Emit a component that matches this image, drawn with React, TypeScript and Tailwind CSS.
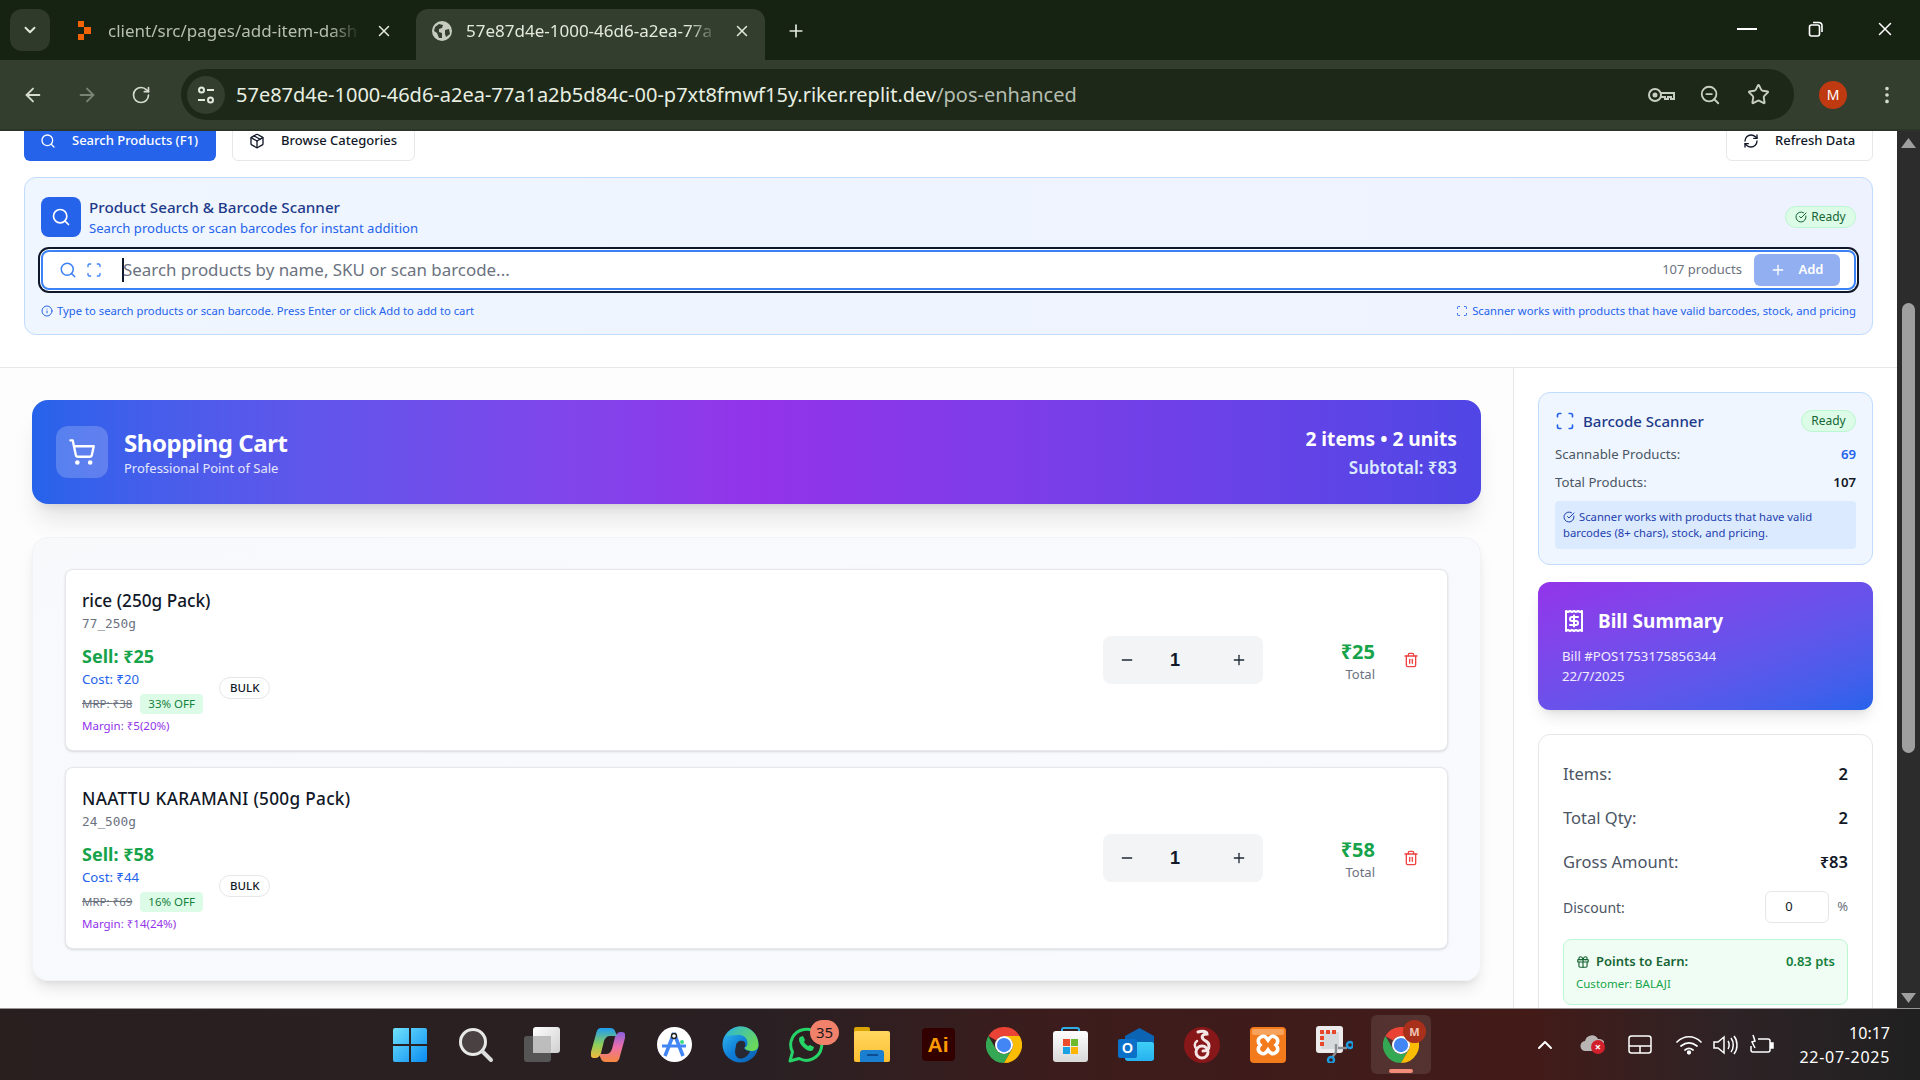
import React from "react";
import { ArrowLeft, ArrowRight, RotateCw, ZoomOut, Star, EllipsisVertical, ChevronDown, X, Plus, Minus, Search, Package, RefreshCw, Scan, CircleCheckBig, Info, ShoppingCart, Trash2, Receipt, Gift, ChevronUp } from "lucide-react";

function ChromeLogo({ size = 36 }: { size?: number }) {
  return (
    <svg width={size} height={size} viewBox="0 0 48 48">
      <path fill="#ea4335" d="M3.2 12A24 24 0 0 1 44.8 12L24 12A12 12 0 0 0 13.6 18Z" />
      <path fill="#34a853" d="M3.2 12A24 24 0 0 0 24 48L34.4 30A12 12 0 0 1 13.6 30Z" />
      <path fill="#fbbc04" d="M44.8 12A24 24 0 0 1 24 48L34.4 30A12 12 0 0 0 34.4 18L24 12Z" />
      <circle cx="24" cy="24" r="12" fill="#fff" />
      <circle cx="24" cy="24" r="9.5" fill="#4285f4" />
    </svg>
  );
}

function TaskIcon({ children, className = "" }: { children: React.ReactNode; className?: string }) {
  return <div className={`relative w-[66px] h-[59px] shrink-0 flex items-center justify-center ${className}`}>{children}</div>;
}

function Item({ name, nameClass = "", sku, sell, cost, mrp, off, margin, total }: { name: string; nameClass?: string; sku: string; sell: string; cost: string; mrp: string; off: string; margin: string; total: string }) {
  return (
    <div className="h-[182px] rounded-lg border border-[#e5e7eb] bg-white shadow-sm pl-[16px] pr-[28px] flex items-center justify-between">
      <div className="mt-[2px]">
        <div className={`h-[26px] leading-[28px] text-[17.2px] font-medium text-[#111827] ${nameClass}`}>{name}</div>
        <div className="mt-[2px] h-[18px] leading-[18px] text-[12.8px] text-[#6b7280] font-['DejaVu_Sans_Mono',monospace]">{sku}</div>
        <div className="mt-[10px] flex items-center gap-[15px]">
          <div className="w-[122px]">
            <div className="h-[26px] leading-[26px] text-[18px] font-bold text-[#16a34a]">Sell: {sell}</div>
            <div className="h-[20px] leading-[20px] text-[13.2px] text-[#2563eb]">Cost: {cost}</div>
            <div className="mt-[4px] flex items-center h-[22px]">
              <span className="text-[11.5px] text-[#6b7280] line-through">MRP: {mrp}</span>
              <span className="ml-[8px] h-[20px] px-[8px] rounded bg-[#dcfce7] text-[#15803d] text-[11.5px] leading-[20px] whitespace-nowrap">{off}</span>
            </div>
            <div className="mt-[2px] h-[18px] leading-[18px] text-[11.5px] text-[#9333ea]">{margin}</div>
          </div>
          <span className="-mt-[2px] h-[22px] px-[10px] rounded-full border border-[#e5e7eb] text-[11.5px] font-medium leading-[20px] text-[#111827]">BULK</span>
        </div>
      </div>
      <div className="flex items-center">
        <div className="w-[160px] h-[48px] rounded-lg bg-[#f3f4f6] flex items-center text-[#1f2937]">
          <div className="w-[48px] flex justify-center"><Minus size={16} /></div>
          <div className="w-[48px] text-center text-[18px] font-semibold text-[#111827] font-['Liberation_Sans',sans-serif]">1</div>
          <div className="ml-[16px] w-[48px] flex justify-center"><Plus size={16} /></div>
        </div>
        <div className="w-[112px] text-right">
          <div className="mt-[1px] h-[26px] leading-[28px] text-[20px] font-bold text-[#16a34a]">{total}</div>
          <div className="h-[20px] leading-[20px] text-[13px] text-[#6b7280]">Total</div>
        </div>
        <div className="ml-[28px]"><Trash2 size={16} className="text-[#ef4444]" /></div>
      </div>
    </div>
  );
}

export default function App() {
  return (
    <div className="h-screen w-full flex flex-col overflow-hidden font-['Noto_Sans',sans-serif]">
      {/* tab strip */}
      <div className="h-[60px] shrink-0 bg-[#172312] flex items-end relative">
        <div className="absolute left-[10px] top-[9px] w-[40px] h-[42px] rounded-xl bg-[#2f3a2a] flex items-center justify-center text-[#e3e9dd]"><ChevronDown size={18} strokeWidth={2.5} /></div>
        <div className="ml-[78px] mb-[19px] w-[330px] flex items-center h-[20px]">
          <svg width="14" height="22" viewBox="0 0 14 22" className="shrink-0"><rect x="0" y="1" width="6" height="6" fill="#f26207" /><rect x="6" y="7" width="7" height="7" fill="#f26207" /><rect x="0" y="14" width="6" height="6" fill="#f26207" /></svg>
          <span className="ml-[16px] w-[252px] shrink-0 overflow-hidden whitespace-nowrap text-[17px] text-[#b7bfb0] [mask-image:linear-gradient(90deg,#000_88%,transparent)]">client/src/pages/add-item-dash</span>
          <X size={18} className="ml-[15px] shrink-0 text-[#e3e9dd]" />
        </div>
        <div className="ml-[8px] w-[349px] h-[51px] rounded-t-xl bg-[#333e2f] flex items-center pl-[16px] pb-[7px]">
          <svg width="20" height="20" viewBox="0 0 20 20" className="shrink-0"><circle cx="10" cy="10" r="10" fill="#c6cdc0" /><path d="M3 6l4-3 4 1-1 3-3 1 0 3 3 1 0 5-3 0-2-5-3-2z M13 9l4-1 1 5-4 3-1-3z" fill="#333e2f" /></svg>
          <span className="ml-[14px] w-[252px] shrink-0 overflow-hidden whitespace-nowrap text-[17px] text-[#e3e9dd] [mask-image:linear-gradient(90deg,#000_88%,transparent)]">57e87d4e-1000-46d6-a2ea-77a</span>
          <X size={18} className="ml-[15px] shrink-0 text-[#e3e9dd]" />
        </div>
        <div className="ml-[21px] mb-[19px] text-[#e3e9dd]"><Plus size={20} /></div>
        <div className="absolute left-[1737px] top-[28px] w-[20px] h-[2px] bg-white" />
        <svg className="absolute left-[1808px] top-[21px]" width="16" height="16" viewBox="0 0 16 16" fill="none" stroke="#fff" strokeWidth="1.6"><rect x="1.5" y="4" width="10" height="11" rx="2" /><path d="M5 1.5h6a3 3 0 0 1 3 3V11" /></svg>
        <X size={22} strokeWidth={1.6} className="absolute left-[1874px] top-[18px] text-white" />
      </div>
      {/* toolbar */}
      <div className="h-[71px] shrink-0 bg-[#333e2f] border-b-2 border-[#2c3628] flex items-center">
        <ArrowLeft size={22} className="ml-[22px] text-[#d5dccf]" />
        <ArrowRight size={22} className="ml-[32px] text-[#7b8475]" />
        <RotateCw size={20} className="ml-[33px] text-[#d5dccf]" />
        <div className="ml-[30px] w-[1613px] h-[51px] rounded-full bg-[#1d2818] flex items-center pl-[6px]">
          <div className="w-[38px] h-[38px] rounded-full bg-[#333e2f] flex items-center justify-center">
            <svg width="20" height="20" viewBox="0 0 20 20" fill="none" stroke="#e3e9dd" strokeWidth="2"><circle cx="5.5" cy="5" r="2.5" /><path d="M11 5h7M2 15h7" /><circle cx="14.5" cy="15" r="2.5" /></svg>
          </div>
          <span className="ml-[11px] text-[20px] text-[#e8efe2] whitespace-nowrap">57e87d4e-1000-46d6-a2ea-77a1a2b5d84c-00-p7xt8fmwf15y.riker.replit.dev<span className="text-[#b5bdb0]">/pos-enhanced</span></span>
          <div className="ml-auto flex items-center text-[#c8cfc2] pr-[24px]">
            <svg width="28" height="20" viewBox="0 0 28 20" fill="none" stroke="#c8cfc2" strokeWidth="2"><circle cx="7" cy="10" r="6" /><circle cx="7" cy="10" r="1.5" fill="#c8cfc2" /><path d="M13 8h13v6h-3v-2h-3v2h-3v-2h-4" /></svg>
            <ZoomOut size={22} className="ml-[23px]" />
            <Star size={23} className="ml-[26px]" />
          </div>
        </div>
        <div className="ml-[25px] w-[28px] h-[28px] rounded-full bg-[#bf3a10] flex items-center justify-center text-white text-[14px]">M</div>
        <EllipsisVertical size={22} className="ml-[29px] text-[#d5dccf]" />
      </div>
      {/* browser content */}
      <div className="flex-1 min-h-0 flex">
        <div className="w-[1897px] shrink-0 bg-white overflow-hidden flex flex-col">
          <div className="shrink-0 h-[237px] border-b border-[#e5e7eb] px-[24px] overflow-hidden">
            <div className="-mt-[10px] h-[40px] flex items-center">
              <div className="w-[192px] h-[40px] rounded-md bg-[#2563eb] text-white flex items-center pl-[16px] text-[13px] font-medium">
                <Search size={16} /><span className="ml-[16px]">Search Products (F1)</span>
              </div>
              <div className="ml-[16px] w-[183px] h-[40px] rounded-md border border-[#e5e7eb] text-[#111827] flex items-center pl-[16px] text-[13px] font-medium">
                <Package size={16} /><span className="ml-[16px]">Browse Categories</span>
              </div>
              <div className="ml-auto w-[147px] h-[40px] rounded-md border border-[#e5e7eb] text-[#111827] flex items-center pl-[16px] text-[13px] font-medium">
                <RefreshCw size={16} /><span className="ml-[16px]">Refresh Data</span>
              </div>
            </div>
            <div className="mt-[16px] h-[158px] rounded-xl border border-[#bfdbfe] bg-gradient-to-r from-[#eff6ff] to-[#eef2ff] px-[16px] pt-[19px]">
              <div className="flex items-center h-[40px]">
                <div className="w-[40px] h-[40px] rounded-lg bg-[#2563eb] flex items-center justify-center text-white"><Search size={20} /></div>
                <div className="ml-[8px]">
                  <div className="-mt-[1px] h-[22px] leading-[22px] text-[15.2px] font-medium text-[#1e3a8a]">Product Search &amp; Barcode Scanner</div>
                  <div className="h-[20px] leading-[20px] text-[13.1px] text-[#2563eb]">Search products or scan barcodes for instant addition</div>
                </div>
                <div className="ml-auto h-[22px] w-[71px] rounded-full border border-[#bbf7d0] bg-[#dcfce7] flex items-center justify-center text-[#166534] text-[12px]">
                  <CircleCheckBig size={12} /><span className="ml-[4px]">Ready</span>
                </div>
              </div>
              <div className="mt-[13px] h-[40px] rounded-lg border-2 border-[#3b82f6] bg-white ring-2 ring-[#0f172a] ring-offset-1 flex items-center pl-[16px] pr-[14px]">
                <Search size={18} className="text-[#3b82f6]" />
                <Scan size={16} className="ml-[9px] text-[#3b82f6]" />
                <div className="ml-[20px] w-[2px] h-[24px] bg-[#0f172a] shrink-0" />
                <input readOnly placeholder="Search products by name, SKU or scan barcode..." className="flex-1 min-w-0 outline-none text-[16.9px] placeholder:text-[#6b7280] -ml-[1px]" />
                <span className="text-[13px] text-[#6b7280]">107 products</span>
                <div className="ml-[12px] w-[86px] h-[32px] rounded-md bg-[#92aff2] text-white flex items-center justify-center text-[13px] font-semibold">
                  <Plus size={16} /><span className="ml-[12px]">Add</span>
                </div>
              </div>
              <div className="mt-[12px] h-[18px] flex items-center justify-between text-[11.25px] text-[#2563eb]">
                <div className="flex items-center"><Info size={12} /><span className="ml-[4px]">Type to search products or scan barcode. Press Enter or click Add to add to cart</span></div>
                <div className="flex items-center"><Scan size={12} /><span className="ml-[4px]">Scanner works with products that have valid barcodes, stock, and pricing</span></div>
              </div>
            </div>
          </div>
          <div className="flex-1 min-h-0 flex">
            <div className="w-[1513px] shrink-0 bg-[#fdfdfd] px-[32px] pt-[32px]">
              <div className="h-[104px] rounded-2xl bg-gradient-to-r from-[#2563eb] via-[#9333ea] to-[#4f46e5] shadow-xl flex items-center justify-between pl-[24px] pr-[24px] text-white">
                <div className="flex items-center">
                  <div className="w-[52px] h-[52px] rounded-xl bg-white/20 flex items-center justify-center"><ShoppingCart size={28} /></div>
                  <div className="ml-[16px]">
                    <div className="h-[32px] leading-[32px] text-[24px] font-bold tracking-[-0.45px]">Shopping Cart</div>
                    <div className="h-[18px] leading-[18px] text-[13px] text-white/85">Professional Point of Sale</div>
                  </div>
                </div>
                <div className="text-right">
                  <div className="h-[32px] leading-[32px] text-[19.2px] font-bold">2 items • 2 units</div>
                  <div className="h-[26px] leading-[26px] text-[17px] font-semibold text-[#dbeafe]">Subtotal: ₹83</div>
                </div>
              </div>
              <div className="mt-[33px] h-[444px] rounded-2xl border border-[#f1f3f6] bg-gradient-to-br from-[#f8f9fb] to-[#f8faff] shadow-lg px-[32px] pt-[31px]">
                <Item name="rice (250g Pack)" sku="77_250g" sell="₹25" cost="₹20" mrp="₹38" off="33% OFF" margin="Margin: ₹5(20%)" total="₹25" />
                <div className="h-[16px]" />
                <Item name="NAATTU KARAMANI (500g Pack)" nameClass="tracking-[0.3px]" sku="24_500g" sell="₹58" cost="₹44" mrp="₹69" off="16% OFF" margin="Margin: ₹14(24%)" total="₹58" />
              </div>
            </div>
            <div className="flex-1 min-w-0 border-l border-[#e5e7eb] bg-white px-[24px] pt-[24px]">
              <div className="h-[173px] rounded-xl border border-[#bfdbfe] bg-[#eff6ff] px-[16px] pt-[16px]">
                <div className="flex items-center h-[24px]">
                  <Scan size={20} className="text-[#2563eb]" />
                  <span className="ml-[8px] text-[15px] font-medium text-[#1e3a8a]">Barcode Scanner</span>
                  <span className="ml-auto h-[22px] w-[55px] rounded-full border border-[#bbf7d0] bg-[#dcfce7] text-[#166534] text-[12px] text-center leading-[20px]">Ready</span>
                </div>
                <div className="mt-[12px] h-[20px] flex items-center justify-between text-[13.2px]">
                  <span className="text-[#4b5563]">Scannable Products:</span><span className="font-semibold text-[#2563eb]">69</span>
                </div>
                <div className="mt-[8px] h-[20px] flex items-center justify-between text-[13.2px]">
                  <span className="text-[#4b5563]">Total Products:</span><span className="font-semibold text-[#111827]">107</span>
                </div>
                <div className="mt-[8px] h-[48px] rounded bg-[#dbeafe] px-[8px] pt-[8px] text-[11.25px] leading-[16px] text-[#1e40af]">
                  <CircleCheckBig size={12} className="inline mr-[4px] -mt-[1px]" />Scanner works with products that have valid barcodes (8+ chars), stock, and pricing.
                </div>
              </div>
              <div className="mt-[17px] h-[128px] rounded-xl bg-gradient-to-br from-[#9333ea] to-[#2563eb] shadow-lg text-white px-[24px] pt-[25px]">
                <div className="flex items-center h-[28px]">
                  <Receipt size={24} />
                  <span className="ml-[12px] text-[19px] font-bold">Bill Summary</span>
                </div>
                <div className="mt-[11px] h-[20px] leading-[20px] text-[13.2px] text-white/90">Bill #POS1753175856344</div>
                <div className="h-[20px] leading-[20px] text-[13.2px] text-white/90">22/7/2025</div>
              </div>
              <div className="mt-[24px] h-[320px] rounded-xl border border-[#e5e7eb] bg-white px-[24px] pt-[27px]">
                <div className="h-[24px] flex items-center justify-between text-[16.5px]"><span className="text-[#4b5563]">Items:</span><span className="font-semibold text-[#111827]">2</span></div>
                <div className="mt-[20px] h-[24px] flex items-center justify-between text-[16.5px]"><span className="text-[#4b5563]">Total Qty:</span><span className="font-semibold text-[#111827]">2</span></div>
                <div className="mt-[20px] h-[24px] flex items-center justify-between text-[16.5px]"><span className="text-[#4b5563]">Gross Amount:</span><span className="font-semibold text-[#111827]">₹83</span></div>
                <div className="mt-[17px] h-[32px] flex items-center text-[14px]">
                  <span className="text-[#4b5563]">Discount:</span>
                  <div className="ml-auto w-[64px] h-[32px] rounded-md border border-[#e5e7eb] flex items-center pl-[19px] text-[13px] text-[#111827]">0</div>
                  <span className="ml-[8px] text-[13px] text-[#6b7280]">%</span>
                </div>
                <div className="mt-[16px] h-[66px] rounded-lg border border-[#bbf7d0] bg-[#f0fdf4] px-[12px] pt-[11px]">
                  <div className="h-[22px] flex items-center justify-between text-[13px] font-semibold text-[#166534]">
                    <span className="flex items-center"><Gift size={14} /><span className="ml-[6px]">Points to Earn:</span></span><span className="text-[#15803d]">0.83 pts</span>
                  </div>
                  <div className="mt-[2px] h-[18px] leading-[18px] text-[11.5px] text-[#16a34a]">Customer: BALAJI</div>
                </div>
              </div>
            </div>
          </div>
        </div>
        {/* scrollbar */}
        <div className="flex-1 bg-[#2c2c2c] flex flex-col items-center">
          <svg className="mt-[7px] shrink-0" width="15" height="10" viewBox="0 0 15 10"><path d="M7.500 0L15 10H0Z" fill="#9f9f9f" /></svg>
          <div className="mt-[155px] w-[13px] h-[450px] rounded-full bg-[#9f9f9f] shrink-0" />
          <svg className="mt-[240px] shrink-0" width="15" height="10" viewBox="0 0 15 10"><path d="M7.500 10L15 0H0Z" fill="#9f9f9f" /></svg>
        </div>
      </div>
      {/* taskbar */}
      <div className="h-[72px] shrink-0 border-t border-[#9a9696] flex items-start pt-[6px] pl-[377px] bg-[linear-gradient(90deg,#2a1f1f_0%,#2a2023_40%,#3c1c1c_55%,#421b18_80%,#2e2326_90%,#202020_100%)]">
        <TaskIcon>
          <svg width="36" height="36" viewBox="0 0 36 36"><defs><linearGradient id="w" x1="0" y1="0" x2="1" y2="1"><stop offset="0" stopColor="#6fe3fd" /><stop offset="1" stopColor="#0a8bf0" /></linearGradient></defs><path fill="url(#w)" d="M1 3a2 2 0 0 1 2-2h14v16H1zM19 1h14a2 2 0 0 1 2 2v14H19zM1 19h16v16H3a2 2 0 0 1-2-2zM19 19h16v14a2 2 0 0 1-2 2H19z" /></svg>
        </TaskIcon>
        <TaskIcon>
          <svg width="36" height="36" viewBox="0 0 36 36" fill="none"><circle cx="15" cy="15" r="12.5" fill="#4a4242" stroke="#e8e8e8" strokeWidth="3" /><path d="M24.5 24.5L33 33" stroke="#ddd" strokeWidth="4" strokeLinecap="round" /></svg>
        </TaskIcon>
        <TaskIcon>
          <div className="relative w-[36px] h-[36px]">
            <div className="absolute left-[9px] top-[0px] w-[27px] h-[26px] rounded-[3px] bg-gradient-to-br from-white to-[#cfcfcf]" />
            <div className="absolute left-[0px] top-[9px] w-[27px] h-[26px] rounded-[3px] bg-[#5b5b5b]/90" />
            <div className="absolute left-[9px] top-[9px] w-[18px] h-[17px] bg-[#bdbdbd]" />
          </div>
        </TaskIcon>
        <TaskIcon>
          <svg width="34" height="34" viewBox="0 0 34 34">
            <defs>
              <linearGradient id="c1" x1="0" y1="0" x2="0" y2="1"><stop offset="0" stopColor="#1f9cf0" /><stop offset=".55" stopColor="#8ccf5a" /><stop offset="1" stopColor="#f5b83d" /></linearGradient>
              <linearGradient id="c2" x1="0" y1="1" x2="0" y2="0"><stop offset="0" stopColor="#f6893f" /><stop offset=".5" stopColor="#ec6fa8" /><stop offset="1" stopColor="#8a5fe0" /></linearGradient>
            </defs>
            <path fill="url(#c2)" d="M24 34h-9c-3 0-4-1-5-3l-2-5h7c3 0 5-2 6-5l3-12c1-3 3-5 6-5h1c3 0 4 3 3 6l-5 18c-1 4-2 6-5 6z" />
            <path fill="url(#c1)" d="M10 0h9c3 0 4 1 5 3l2 5h-7c-3 0-5 2-6 5l-3 12c-1 3-3 5-6 5h-1c-3 0-4-3-3-6l5-18c1-4 2-6 5-6z" />
          </svg>
        </TaskIcon>
        <TaskIcon>
          <div className="relative w-[35px] h-[35px] rounded-full bg-white flex items-center justify-center">
            <svg width="26" height="30" viewBox="0 0 26 30" fill="none"><path d="M13 3L4 26M13 3L22 26" stroke="#4285f4" strokeWidth="3.5" /><path d="M1 16h24" stroke="#4285f4" strokeWidth="3" /><circle cx="13" cy="6" r="2.5" fill="#fff" stroke="#222" strokeWidth="1.4" /><circle cx="21" cy="12" r="2" fill="#3ddc84" /></svg>
          </div>
        </TaskIcon>
        <TaskIcon>
          <svg width="37" height="37" viewBox="0 0 37 37"><defs><linearGradient id="e1" x1="0" y1="0" x2="1" y2="1"><stop offset="0" stopColor="#35c1f1" /><stop offset=".5" stopColor="#0f7ed8" /><stop offset="1" stopColor="#0b5cad" /></linearGradient><linearGradient id="e2" x1="0" y1="0" x2="1" y2="0.6"><stop offset="0" stopColor="#2bb5d8" /><stop offset="1" stopColor="#6ad85a" /></linearGradient></defs><circle cx="18.5" cy="18.5" r="18" fill="url(#e1)" /><path fill="url(#e2)" d="M4 10C8 3 14 .5 18.5.5 28 .5 36.5 8 36.5 19c0 4-3 6-7 6-3 0-6-1-7-3 2-1 3-3 3-5 0-5-5-9-10-8-5 0-9 1-11.5 1z" /><path fill="#2a2024" d="M14 20c0-4 4-6 7-5 3 1 3 5 1 7 1 2 3 3 6 3-2 6-8 9-12 7-4-3-3-8-2-12z" opacity=".9" /></svg>
        </TaskIcon>
        <TaskIcon>
          <svg width="36" height="37" viewBox="0 0 36 37" fill="none"><path d="M2 35l2.5-9A15.5 15.5 0 1 1 11 32.5z" stroke="#25d366" strokeWidth="3" strokeLinejoin="round" /><path d="M12 11c-2 2-1 6 3 10s8 5 10 3l1-3-4-2-2 1c-2-1-3-3-4-4l1-2-2-4z" fill="#25d366" /></svg>
          <div className="absolute left-[37px] top-[5px] w-[29px] h-[25px] rounded-full bg-[#f2816c] text-[#1a1a1a] text-[15px] leading-[25px] text-center">35</div>
        </TaskIcon>
        <TaskIcon>
          <div className="relative w-[36px] h-[35px]">
            <div className="absolute left-0 top-0 w-[16px] h-[8px] rounded-t-[2px] bg-[#d9a400]" />
            <div className="absolute left-0 top-[4px] w-[36px] h-[31px] rounded-[2px] bg-gradient-to-b from-[#ffd75e] to-[#fdbf2e]" />
            <div className="absolute left-[6px] bottom-0 w-[24px] h-[12px] rounded-t-[3px] bg-[#1a7fd0] flex justify-center pt-[4px]"><div className="w-[11px] h-[2px] bg-[#0b4f92]" /></div>
          </div>
        </TaskIcon>
        <TaskIcon>
          <div className="w-[33px] h-[33px] rounded-[4px] bg-[#330000] text-[#ff9a00] font-bold text-[21px] leading-[33px] text-center font-['Liberation_Sans',sans-serif]">Ai</div>
        </TaskIcon>
        <TaskIcon><ChromeLogo /></TaskIcon>
        <TaskIcon>
          <div className="relative w-[35px] h-[35px]">
            <div className="absolute left-[8px] top-0 w-[19px] h-[10px] rounded-t-[3px] border-2 border-b-0 border-[#2db0e8]" />
            <div className="absolute left-0 top-[4px] w-[35px] h-[31px] rounded-[3px] bg-gradient-to-b from-white to-[#d8d8d8]" />
            <div className="absolute left-[10px] top-[12px] grid grid-cols-2 gap-[1px]">
              <div className="w-[7px] h-[7px] bg-[#ea4c2c]" /><div className="w-[7px] h-[7px] bg-[#6dbb2c]" /><div className="w-[7px] h-[7px] bg-[#1ba1e2]" /><div className="w-[7px] h-[7px] bg-[#fbb500]" />
            </div>
          </div>
        </TaskIcon>
        <TaskIcon>
          <div className="relative w-[36px] h-[33px]">
            <div className="absolute left-[7px] top-[0px] w-[29px] h-[32px] bg-[#0c64b5] [clip-path:polygon(50%_0,100%_25%,100%_100%,0_100%,0_25%)]" />
            <div className="absolute left-[7px] top-[14px] w-[29px] h-[19px] rounded-[3px] bg-gradient-to-b from-[#3ed0f7] to-[#27b1ef]" />
            <div className="absolute left-0 top-[11px] w-[19px] h-[19px] rounded-[2px] bg-[#0a70c8] text-white text-[14px] font-bold leading-[18px] text-center font-['Liberation_Sans',sans-serif]">O</div>
          </div>
        </TaskIcon>
        <TaskIcon>
          <svg width="36" height="36" viewBox="0 0 36 36" fill="none"><circle cx="18" cy="18" r="18" fill="#88171a" /><path d="M14 5c5-2 9 0 9 2-4 0-6 2-4 5 3 3 6 2 6 7s-4 5-6 5" stroke="#f5e6e6" strokeWidth="3" strokeLinecap="round" /><circle cx="18" cy="25" r="6" stroke="#f5e6e6" strokeWidth="3" /><path d="M13 14c-3 2-3 6 0 8" stroke="#f5e6e6" strokeWidth="2.5" strokeLinecap="round" /></svg>
        </TaskIcon>
        <TaskIcon>
          <svg width="36" height="36" viewBox="0 0 36 36"><rect width="36" height="36" rx="4" fill="#f47b1c" /><rect x="2" y="2" width="32" height="6" rx="2" fill="#f8a35c" /><path d="M11 10c3-2 5 0 7 3 2-3 4-5 7-3 4 2 3 6 1 8 2 2 3 6-1 8-3 2-5 0-7-3-2 3-4 5-7 3-4-2-3-6-1-8-2-2-3-6 1-8z" fill="none" stroke="#fff" strokeWidth="3.6" /></svg>
        </TaskIcon>
        <TaskIcon>
          <svg width="37" height="37" viewBox="0 0 37 37" fill="none"><rect x="0" y="0" width="27" height="27" rx="3" fill="#ececec" /><rect x="5" y="6" width="18" height="17" rx="1" fill="#d7dadd" /><g fill="#e8472c"><rect x="4" y="4" width="4" height="4" /><rect x="10" y="4" width="4" height="4" /><rect x="16" y="4" width="4" height="4" /><rect x="4" y="10" width="4" height="4" /><rect x="4" y="16" width="4" height="4" /></g><path d="M20 18v8l-4 6M22 22h9" stroke="#8a8f93" strokeWidth="2.4" /><circle cx="34" cy="19" r="3" stroke="#1b9be0" strokeWidth="2.4" /><circle cx="15" cy="34" r="3" stroke="#1b9be0" strokeWidth="2.4" /></svg>
        </TaskIcon>
        <TaskIcon className="rounded-md bg-white/10 !w-[60px] ml-[4px]">
          <ChromeLogo />
          <div className="absolute left-[32px] top-[5px] w-[23px] h-[23px] rounded-full bg-[#a9301a] text-[#f0c5b5] text-[11px] font-bold leading-[23px] text-center">M</div>
          <div className="absolute left-[18px] bottom-[1px] w-[24px] h-[4px] rounded-full bg-[#f28b77]" />
        </TaskIcon>
        <div className="ml-[102px] h-[59px] flex items-center text-white">
          <ChevronUp size={24} className="shrink-0" />
          <div className="relative ml-[23px] w-[26px] h-[24px] shrink-0">
            <svg width="24" height="16" viewBox="0 0 24 16" className="absolute left-0 top-[2px]"><path d="M6 16a5 5 0 0 1-1-10 7 7 0 0 1 13-2 6 6 0 0 1 2 12z" fill="#b9b5b5" /></svg>
            <div className="absolute left-[11px] top-[7px] w-[14px] h-[14px] rounded-full bg-[#d1202c] text-white text-[11px] leading-[13px] text-center font-bold">×</div>
          </div>
          <svg className="ml-[22px] shrink-0" width="24" height="20" viewBox="0 0 24 20" fill="none" stroke="#fff" strokeWidth="1.5"><rect x="1" y="1" width="22" height="17" rx="2.5" /><path d="M1 11h22M12 11v7" /></svg>
          <svg className="ml-[24px] shrink-0" width="26" height="20" viewBox="0 0 26 20" fill="none" stroke="#fff" strokeWidth="1.7" strokeLinecap="round"><path d="M1 7c7-7 17-7 24 0M5 11c5-4 11-4 16 0M9 15c2.500-2 5.500-2 8 0" /><circle cx="13" cy="17.500" r="1.300" fill="#fff" /></svg>
          <svg className="ml-[11px] shrink-0" width="25" height="22" viewBox="0 0 25 22" fill="none" stroke="#fff" strokeWidth="1.5"><path d="M1 8v6h4l6 5V3L5 8z" /><path d="M15 7c1.500 2 1.500 6 0 8M18 4c3 4 3 10 0 14M21 2c4 5 4 13 0 18" /></svg>
          <svg className="ml-[11px] shrink-0" width="25" height="22" viewBox="0 0 25 22" fill="none" stroke="#fff" strokeWidth="1.5"><path d="M9 5h10a2 2 0 0 1 2 2v9a2 2 0 0 1-2 2H4a2 2 0 0 1-2-2v-4" /><path d="M21 9h3v5h-3" fill="#fff" /><path d="M4 1l2 6-3 1 3 6" /></svg>
          <div className="ml-[19px] w-[97px] shrink-0 text-right text-[16px] leading-[24px] text-white">
            <div>10:17</div>
            <div className="whitespace-nowrap tracking-[0.7px]">22-07-2025</div>
          </div>
        </div>
      </div>
    </div>
  );
}
